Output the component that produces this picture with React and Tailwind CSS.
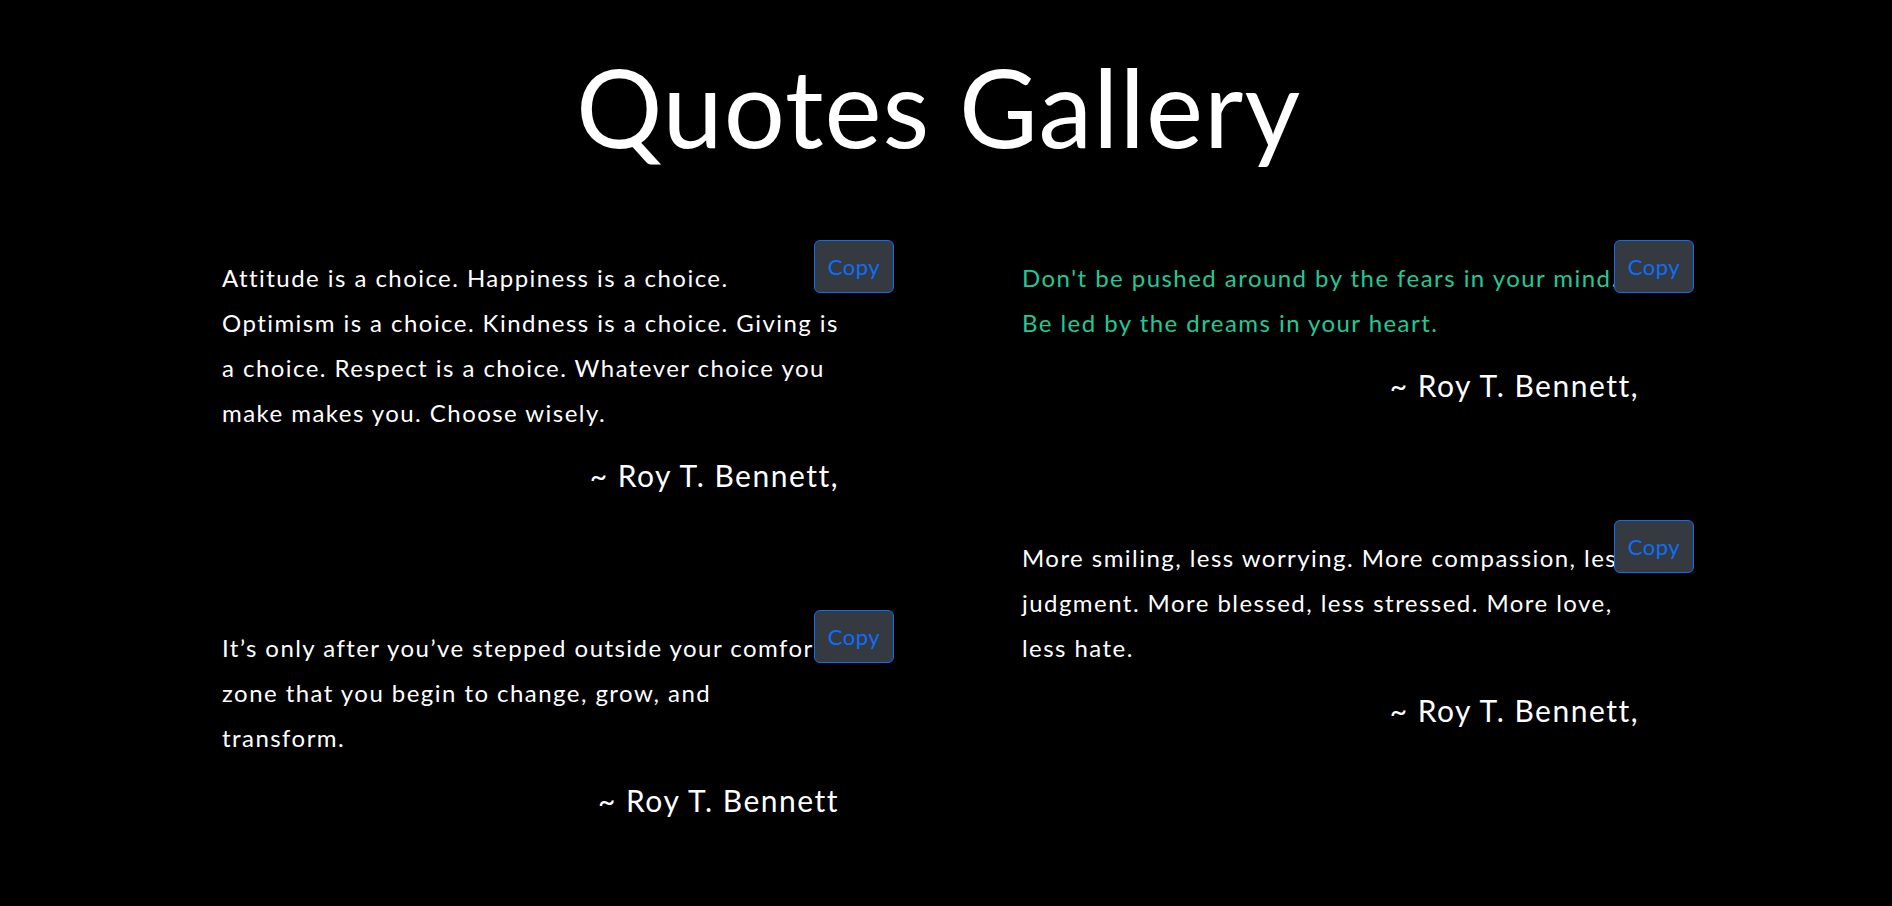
import React from 'react';

// quotes shown in the two columns
const leftQuotes = [
    {
        text: 'Attitude is a choice. Happiness is a choice. Optimism is a choice. Kindness is a choice. Giving is a choice. Respect is a choice. Whatever choice you make makes you. Choose wisely.',
        author: '~ Roy T. Bennett,',
    },
    {
        text: 'It’s only after you’ve stepped outside your comfort zone that you begin to change, grow, and transform.',
        author: '~ Roy T. Bennett',
    },
];

const rightQuotes = [
    {
        text: "Don't be pushed around by the fears in your mind. Be led by the dreams in your heart.",
        author: '~ Roy T. Bennett,',
        green: true,
    },
    {
        text: 'More smiling, less worrying. More compassion, less judgment. More blessed, less stressed. More love, less hate.',
        author: '~ Roy T. Bennett,',
    },
];

const QuoteCard = ({ text, author, green }) => (
    <div className="relative w-[672px] pt-[15px] pr-[54px] mb-[115px]">
        <p className={`text-[24px] leading-[45px] tracking-[1.45px] ${green ? 'text-[#20c997]' : 'text-white'}`}>
            {text}
        </p>
        <p className="mt-[20px] mr-[1px] text-right text-[30px] leading-[40px] tracking-[1.5px] text-white">{author}</p>
        <button className="absolute top-0 right-0 w-[80px] h-[53px] rounded-md border border-[#0d6efd] bg-[#343a40] text-[#0d6efd] text-[22px] tracking-[0.5px]">
            Copy
        </button>
    </div>
);

export default function App() {
    return (
        <div className="h-screen overflow-y-scroll bg-black font-['Lato',sans-serif] [&::-webkit-scrollbar]:w-2 [&::-webkit-scrollbar-track]:bg-[#0b0b0b] [&::-webkit-scrollbar-thumb]:bg-[#666]">
            <h1 className="pt-[52px] pr-[15px] text-center text-[108px] leading-none tracking-[1px] text-white">Quotes Gallery</h1>

            <div className="mx-auto mt-[80px] grid w-[1600px] grid-cols-2 pb-[600px]">
                <div className="pl-[76px]">
                    {leftQuotes.map((q, idx) => (
                        <QuoteCard key={idx} {...q} />
                    ))}
                </div>
                <div className="pl-[76px]">
                    {rightQuotes.map((q, idx) => (
                        <QuoteCard key={idx} {...q} />
                    ))}
                </div>
            </div>
        </div>
    );
}
